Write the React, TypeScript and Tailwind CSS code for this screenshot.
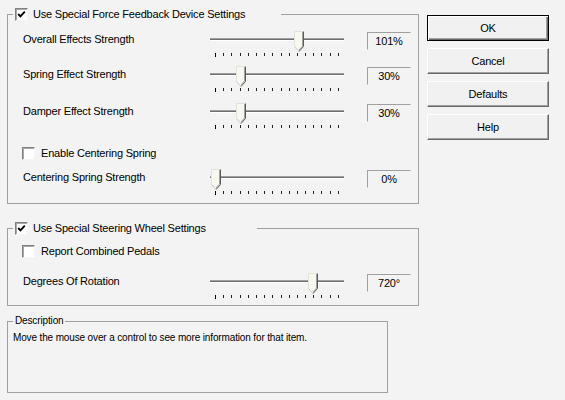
import type { ReactNode } from 'react';

function CheckBox({ checked }: { checked?: boolean }) {
  return (
    <span className="relative inline-block w-[13px] h-[13px] shrink-0 bg-white border border-t-[#808080] border-l-[#808080] border-b-[#f6f6f6] border-r-[#f6f6f6] shadow-[inset_1px_1px_0_#a8a8a8]">
      {checked && (
        <svg className="absolute left-[1px] top-[1px]" width="9" height="9" viewBox="0 0 9 9">
          <path d="M1.2 4 L3.4 6.3 L7.8 1.6" fill="none" stroke="#000" strokeWidth="1.9" />
        </svg>
      )}
    </span>
  );
}

// pos = thumb offset in px from the track start
function Slider({ pos }: { pos: number }) {
  return (
    <div className="relative w-[134px] h-[26px] shrink-0">
      {/* track */}
      <div className="absolute left-0 right-0 top-[7px] h-[3px] bg-[#6e6e6e] border-t border-b border-t-[#a0a0a0] border-b-white" />
      {/* thumb */}
      <svg className="absolute top-0" style={{ left: pos }} width="11" height="22" viewBox="0 0 11 22">
        <path d="M0.5 0.5 H9.5 V15.5 L5 20.5 L0.5 15.5 Z" fill="#f8f8f3" />
        <path d="M0.5 15.5 V0.5 H9.5" fill="none" stroke="#e2e2da" />
        <path d="M0.5 15.5 L5 20.5" fill="none" stroke="#c8c8c0" />
        <path d="M9.5 0.5 V15.5 L5 20.5" fill="none" stroke="#5a5a5a" />
        <path d="M8.5 1 V15 L5 19" fill="none" stroke="#a0a0a0" />
      </svg>
      {/* ticks */}
      <div className="absolute left-[5px] w-[124px] top-[22px] flex justify-between items-start">
        {Array.from({ length: 16 }).map((_, i) => (
          <span key={i} className={i === 0 ? 'w-px h-[4px] bg-black' : 'w-px h-[3px] bg-[#222]'} />
        ))}
      </div>
    </div>
  );
}

function ValueBox({ children }: { children: ReactNode }) {
  return (
    <div className="ml-[23px] mt-[1px] w-[44px] h-[18px] flex items-center justify-center border border-t-[#a0a0a0] border-l-[#a0a0a0] border-b-[#f3f3f3] border-r-[#f3f3f3] leading-[14px]">
      {children}
    </div>
  );
}

function SliderRow({ label, pos, value, className }: { label: string; pos: number; value: string; className: string }) {
  return (
    <div className={`flex items-start pl-[15px] ${className}`}>
      <div className="w-[187px] mt-[1px] leading-[14px]">{label}</div>
      <Slider pos={pos} />
      <ValueBox>{value}</ValueBox>
    </div>
  );
}

function CheckRow({ label, className }: { label: string; className: string }) {
  return (
    <div className={`flex items-center gap-[6px] pl-[14px] h-[14px] ${className}`}>
      <CheckBox />
      <span className="leading-[14px]">{label}</span>
    </div>
  );
}

function Button({ children, isDefault }: { children: ReactNode; isDefault?: boolean }) {
  return (
    <button
      className={
        isDefault
          ? 'w-[122px] h-[26px] bg-[#f1f1f1] border border-black shadow-[inset_1px_1px_0_#fff,inset_-1px_-1px_0_#696969,inset_-2px_-2px_0_#a0a0a0] leading-[14px]'
          : 'w-[122px] h-[26px] bg-[#f1f1f1] border border-t-white border-l-white border-r-[#696969] border-b-[#696969] shadow-[inset_-1px_-1px_0_#a0a0a0] leading-[14px]'
      }
    >
      {children}
    </button>
  );
}

export default function App() {
  return (
    <div className="w-[565px] h-[400px] bg-[#f3f3f3] text-black text-[11px] tracking-[-0.2px] font-['Liberation_Sans',Arial,sans-serif] flex px-[7px] pt-[6px] overflow-hidden">
      {/* Left column */}
      <div className="w-[412px] flex flex-col">
        {/* Force feedback group */}
        <fieldset className="border border-[#a0a0a0] p-0 m-0 pb-[8px] min-w-0">
          <legend className="ml-[5px] pl-[2px] w-[268px] h-[16px] flex items-center gap-[5px]">
            <CheckBox checked />
            <span className="leading-[14px]">Use Special Force Feedback Device Settings</span>
          </legend>
          <SliderRow className="mt-[9px]" label="Overall Effects Strength" pos={84} value="101%" />
          <SliderRow className="mt-[9px]" label="Spring Effect Strength" pos={26} value="30%" />
          <SliderRow className="mt-[11px]" label="Damper Effect Strength" pos={26} value="30%" />
          <CheckRow className="mt-[17px]" label="Enable Centering Spring" />
          <SliderRow className="mt-[9px]" label="Centering Spring Strength" pos={1} value="0%" />
        </fieldset>

        {/* Steering wheel group */}
        <fieldset className="mt-[16px] border border-[#a0a0a0] p-0 m-0 pb-[6px] min-w-0">
          <legend className="ml-[5px] pl-[2px] w-[244px] h-[16px] flex items-center gap-[5px]">
            <CheckBox checked />
            <span className="leading-[14px]">Use Special Steering Wheel Settings</span>
          </legend>
          <CheckRow className="mt-[8px]" label="Report Combined Pedals" />
          <SliderRow className="mt-[15px]" label="Degrees Of Rotation" pos={98} value="720°" />
        </fieldset>

        {/* Description group */}
        <fieldset className="mt-[8px] w-[381px] h-[79px] border border-[#a0a0a0] p-0 m-0 min-w-0 text-[10px] tracking-[-0.14px]">
          <legend className="ml-[5px] px-[2px] leading-[14px]">Description</legend>
          <div className="mt-[3px] pl-[5px] leading-[14px]">
            Move the mouse over a control to see more information for that item.
          </div>
        </fieldset>
      </div>

      {/* Buttons */}
      <div className="ml-[8px] pt-[9px] flex flex-col gap-[7px]">
        <Button isDefault>OK</Button>
        <Button>Cancel</Button>
        <Button>Defaults</Button>
        <Button>Help</Button>
      </div>
    </div>
  );
}
